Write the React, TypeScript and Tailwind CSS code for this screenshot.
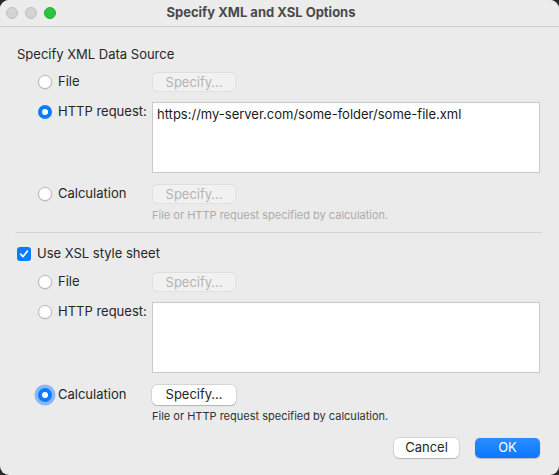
import React from 'react'

const font = { fontFamily: 'Inter, "Liberation Sans", Arial, sans-serif' }

function TrafficLights() {
  return (
    <div className="absolute left-[6px] top-[7px] flex gap-[7px]">
      <span className="h-[12px] w-[12px] rounded-full border border-[#bdbdbd] bg-[#d3d3d3]" />
      <span className="h-[12px] w-[12px] rounded-full border border-[#bdbdbd] bg-[#d3d3d3]" />
      <span className="h-[12px] w-[12px] rounded-full border border-[#1fae33] bg-[#2ac43f]" />
    </div>
  )
}

function Radio({ checked = false, focused = false }: { checked?: boolean; focused?: boolean }) {
  if (checked) {
    return (
      <span
        className={`flex h-[14px] w-[14px] shrink-0 items-center justify-center rounded-full bg-[#0a7cff] ${
          focused ? 'shadow-[0_0_0_3.5px_rgba(60,140,255,0.55)]' : ''
        }`}
      >
        <span className="h-[6px] w-[6px] rounded-full bg-white" />
      </span>
    )
  }
  return (
    <span className="h-[14px] w-[14px] shrink-0 rounded-full border border-[#b8b8b8] bg-white shadow-[0_0.5px_1px_rgba(0,0,0,0.12)]" />
  )
}

function Checkbox() {
  return (
    <span className="flex h-[14px] w-[14px] shrink-0 items-center justify-center rounded-[3px] bg-[#0a7cff]">
      <svg width="10" height="10" viewBox="0 0 10 10" fill="none">
        <path d="M1.8 5.2 L4 7.6 L8.3 2.2" stroke="white" strokeWidth="1.7" strokeLinecap="round" strokeLinejoin="round" />
      </svg>
    </span>
  )
}

function SpecifyButton({ enabled = false }: { enabled?: boolean }) {
  return enabled ? (
    <button className="h-[20px] w-[84px] rounded-[5px] bg-white text-[13px] text-[#262626] shadow-[0_0_0_0.5px_rgba(0,0,0,0.18),0_1px_1px_rgba(0,0,0,0.15)]">
      Specify…
    </button>
  ) : (
    <button className="h-[20px] w-[84px] rounded-[5px] border border-[#e0e0e0] bg-[#f1f1f1] text-[13px] text-[#b4b4b4]">
      Specify…
    </button>
  )
}

function Option({
  label,
  checked,
  focused,
  children,
}: {
  label: string
  checked?: boolean
  focused?: boolean
  children: React.ReactNode
}) {
  return (
    <div className="flex items-start">
      <div className="flex h-[20px] w-[135px] shrink-0 items-center gap-[6px] pl-[21px]">
        <Radio checked={checked} focused={focused} />
        <span className="text-[13px] text-[#262626]">{label}</span>
      </div>
      <div className="flex flex-1 flex-col">{children}</div>
    </div>
  )
}

function UrlBox({ value }: { value?: string }) {
  return (
    <div className="h-[71px] border border-[#c9c9c9] bg-white px-[4px] pt-[2px] text-[13px] text-[#1a1a1a]">
      {value}
    </div>
  )
}

export default function App() {
  return (
    <div className="h-[475px] w-[559px] bg-[#2a2a2a]" style={font}>
      <div className="flex h-full w-full flex-col overflow-hidden rounded-[9px] bg-[#ebebeb]">
        <div className="relative flex h-[27px] shrink-0 items-center justify-center border-b border-[#cdcdcd] bg-[#ececec] pr-[37px]">
          <TrafficLights />
          <span className="text-[13px] font-bold text-[#4a4a4a]">Specify XML and XSL Options</span>
        </div>

        <div className="flex flex-col pl-[17px] pr-[19px] pt-[19px]">
          <div className="h-[16px] text-[13px] leading-[16px] text-[#262626]">Specify XML Data Source</div>

          <div className="mt-[10px] flex flex-col gap-[10px]">
            <Option label="File">
              <SpecifyButton />
            </Option>
            <Option label="HTTP request:" checked>
              <UrlBox value="https://my-server.com/some-folder/some-file.xml" />
            </Option>
          </div>
          <div className="mt-[11px]">
            <Option label="Calculation">
              <SpecifyButton />
              <span className="mt-[5px] text-[11px] leading-[13px] text-[#acacac]">
                File or HTTP request specified by calculation.
              </span>
            </Option>
          </div>

          <div className="-mx-[2px] mt-[10px] h-px bg-[#d3d3d3]" />

          <label className="mt-[13px] flex h-[16px] items-center gap-[6px] text-[13px] text-[#262626]">
            <Checkbox />
            Use XSL style sheet
          </label>

          <div className="mt-[10px] flex flex-col gap-[10px]">
            <Option label="File">
              <SpecifyButton />
            </Option>
            <Option label="HTTP request:">
              <UrlBox />
            </Option>
          </div>
          <div className="mt-[12px]">
            <Option label="Calculation" checked focused>
              <SpecifyButton enabled />
              <span className="mt-[5px] text-[11px] leading-[13px] text-[#303030]">
                File or HTTP request specified by calculation.
              </span>
            </Option>
          </div>

          <div className="mt-[15px] flex justify-end gap-[16px]">
            <button className="h-[20px] w-[65px] rounded-[5px] bg-white text-[13px] text-[#262626] shadow-[0_0_0_0.5px_rgba(0,0,0,0.18),0_1px_1px_rgba(0,0,0,0.15)]">
              Cancel
            </button>
            <button className="h-[20px] w-[65px] rounded-[5px] bg-[linear-gradient(180deg,#2b8dff,#0a78ff)] text-[13px] text-white shadow-[0_0.5px_1px_rgba(0,0,0,0.2)]">
              OK
            </button>
          </div>
        </div>
      </div>
    </div>
  )
}
